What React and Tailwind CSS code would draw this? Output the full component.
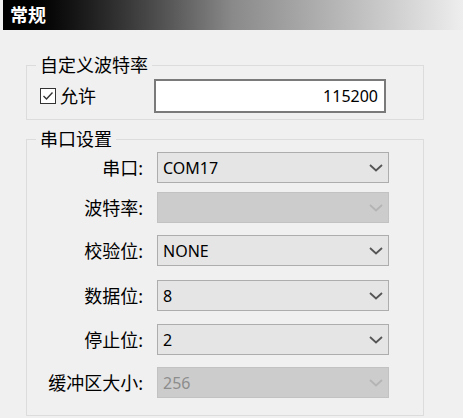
import React from "react";

const FONT = { fontFamily: '"Noto Sans", "Noto Sans CJK SC", sans-serif' };

function Chevron({ disabled }) {
  return (
    <svg width="14" height="8" viewBox="0 0 14 8" className="shrink-0">
      <path
        d="M1 1 L7 6.5 L13 1"
        fill="none"
        stroke={disabled ? "#b4b4b4" : "#555555"}
        strokeWidth="1.8"
      />
    </svg>
  );
}

function Row({ label, value, disabled, mt }) {
  return (
    <div className={`flex items-center ${mt}`}>
      <div className="w-[116px] text-right text-[18px] leading-none text-black">{label}</div>
      <div
        className={`ml-[14px] flex h-[31px] w-[232px] items-center justify-between border pl-[5px] pr-[5px] ${
          disabled ? "border-[#c2c2c2] bg-[#cccccc]" : "border-[#adadad] bg-[#e5e5e5]"
        }`}
      >
        <span className={`text-[16px] leading-none ${disabled ? "text-[#8d8d8d]" : "text-black"}`}>{value}</span>
        <Chevron disabled={disabled} />
      </div>
    </div>
  );
}

export default function App() {
  return (
    <div className="h-[418px] w-[463px] overflow-hidden bg-[#f0f0f0]" style={FONT}>
      <div className="ml-[3px] flex h-[30px] items-center bg-gradient-to-r from-[#000000] via-[#8a8a8a] to-[#eeeeee] pl-[7px]">
        <span className="text-[18px] font-bold leading-none text-white">常规</span>
      </div>

      <div className="relative ml-[26px] mt-[35px] h-[55px] w-[398px] border border-[#dcdcdc]">
        <span className="absolute left-[9px] top-[-12px] bg-[#f0f0f0] px-[4px] text-[18px] leading-[22px] text-black">
          自定义波特率
        </span>
        <div className="flex items-center pt-[13px]">
          <div className="ml-[13px] flex items-center">
            <div className="flex h-[16px] w-[16px] items-center justify-center border border-[#333333] bg-white">
              <svg width="12" height="10" viewBox="0 0 12 10">
                <path d="M1.5 5 L4.5 8 L10.5 1.5" fill="none" stroke="#333333" strokeWidth="1.4" />
              </svg>
            </div>
            <span className="ml-[4px] text-[18px] leading-none text-black">允许</span>
          </div>
          <div className="ml-[58px] flex h-[34px] w-[232px] items-center justify-end border-2 border-[#7a7a7a] bg-white pr-[6px]">
            <span className="text-[16px] leading-none text-black">115200</span>
          </div>
        </div>
      </div>

      <div className="relative ml-[26px] mt-[19px] h-[277px] w-[398px] border border-[#dcdcdc]">
        <span className="absolute left-[9px] top-[-12px] bg-[#f0f0f0] px-[4px] text-[18px] leading-[22px] text-black">
          串口设置
        </span>
        <div className="flex flex-col pt-[12px]">
          <Row label="串口:" value="COM17" mt="mt-0" />
          <Row label="波特率:" value="" disabled mt="mt-[9px]" />
          <Row label="校验位:" value="NONE" mt="mt-[12px]" />
          <Row label="数据位:" value="8" mt="mt-[14px]" />
          <Row label="停止位:" value="2" mt="mt-[13px]" />
          <Row label="缓冲区大小:" value="256" disabled mt="mt-[12px]" />
        </div>
      </div>
    </div>
  );
}
